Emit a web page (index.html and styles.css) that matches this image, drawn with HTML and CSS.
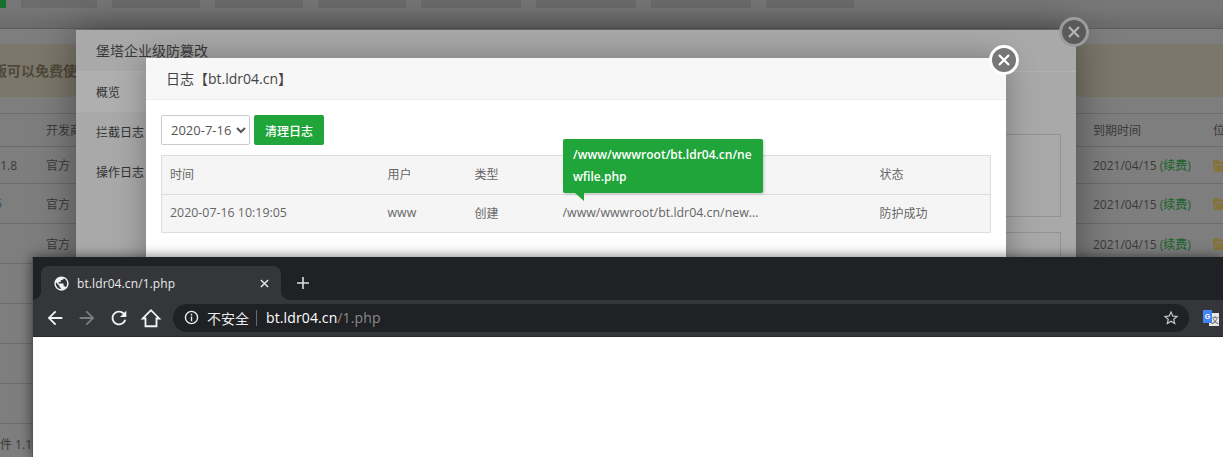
FILE: index.html
```html
<!DOCTYPE html>
<html lang="zh-CN">
<head>
<meta charset="utf-8">
<title>日志</title>
<link rel="stylesheet" href="styles.css">
</head>
<body>
<div class="page">
  <div class="topbar">
    <span class="pill pill-green"></span><span class="pill w76"></span><span class="pill w88"></span><span class="pill w88"></span><span class="pill w88"></span><span class="pill w100"></span><span class="pill w100"></span><span class="pill w100"></span><span class="pill w88"></span>
  </div>
  <div class="alert"><span class="alert-text">版可以免费使用</span></div>
  <table class="soft">
    <colgroup><col class="c-name"><col class="c-dev"><col class="c-date"><col class="c-pos"></colgroup>
    <tr class="r-head"><th></th><th>开发商</th><th>到期时间</th><th>位</th></tr>
    <tr class="r-first"><td class="name n1">1.8</td><td>官方</td><td>2021/04/15 <a class="renew">(续费)</a></td><td><svg class="folder" viewBox="0 0 16 13"><path d="M0 2a1 1 0 0 1 1-1h4l1.500 1.500H13a1 1 0 0 1 1 1V5H3.500L0 11z"/><path d="M4 6h12l-3 7H0z"/></svg></td></tr>
    <tr><td class="name n2">5</td><td>官方</td><td>2021/04/15 <a class="renew">(续费)</a></td><td><svg class="folder" viewBox="0 0 16 13"><path d="M0 2a1 1 0 0 1 1-1h4l1.500 1.500H13a1 1 0 0 1 1 1V5H3.500L0 11z"/><path d="M4 6h12l-3 7H0z"/></svg></td></tr>
    <tr><td class="name"></td><td>官方</td><td>2021/04/15 <a class="renew">(续费)</a></td><td><svg class="folder" viewBox="0 0 16 13"><path d="M0 2a1 1 0 0 1 1-1h4l1.500 1.500H13a1 1 0 0 1 1 1V5H3.500L0 11z"/><path d="M4 6h12l-3 7H0z"/></svg></td></tr>
    <tr><td class="name"></td><td></td><td></td><td></td></tr>
    <tr><td class="name"></td><td></td><td></td><td></td></tr>
    <tr><td class="name"></td><td></td><td></td><td></td></tr>
    <tr><td class="name"></td><td></td><td></td><td></td></tr>
    <tr><td class="name n3">件 1.1</td><td></td><td></td><td></td></tr>
  </table>
</div>

<section class="win-outer">
  <header class="outer-title">堡塔企业级防篡改</header>
  <div class="outer-body">
    <nav class="outer-nav">
      <div class="nav-item nav-active">概览</div>
      <div class="nav-item">拦截日志</div>
      <div class="nav-item">操作日志</div>
    </nav>
    <div class="outer-main">
      <div class="outer-box"></div>
      <div class="outer-box"></div>
    </div>
  </div>
  <button class="close close-outer" aria-label="关闭"><svg viewBox="0 0 14 14"><path d="M2 2l10 10M12 2L2 12"/></svg></button>
</section>

<section class="win-inner">
  <header class="inner-title">日志【bt.ldr04.cn】</header>
  <div class="inner-body">
    <div class="tools">
      <select class="date-select"><option>2020-7-16</option></select>
      <button class="btn-clear">清理日志</button>
    </div>
    <table class="log">
      <colgroup><col class="l1"><col class="l2"><col class="l3"><col class="l4"><col class="l5"></colgroup>
      <thead><tr><th>时间</th><th>用户</th><th>类型</th><th></th><th>状态</th></tr></thead>
      <tbody><tr><td class="lat">2020-07-16 10:19:05</td><td class="lat">www</td><td>创建</td><td class="lat"><div class="path">/www/wwwroot/bt.ldr04.cn/newfile.php</div></td><td>防护成功</td></tr></tbody>
    </table>
  </div>
  <div class="tip">/www/wwwroot/bt.ldr04.cn/newfile.php</div>
  <button class="close close-inner" aria-label="关闭"><svg viewBox="0 0 14 14"><path d="M2 2l10 10M12 2L2 12"/></svg></button>
</section>

<section class="browser">
  <div class="tabstrip">
    <div class="tab">
      <svg class="ico globe" viewBox="0 0 24 24"><path d="M12 2C6.480 2 2 6.480 2 12s4.480 10 10 10 10-4.480 10-10S17.520 2 12 2zm-1 17.930c-3.950-.490-7-3.850-7-7.930 0-.620.080-1.210.210-1.790L9 15v1c0 1.100.900 2 2 2v1.930zm6.900-2.540c-.260-.810-1-1.390-1.900-1.390h-1v-3c0-.550-.450-1-1-1H8v-2h2c.550 0 1-.450 1-1V7h2c1.100 0 2-.900 2-2v-.410c2.930 1.190 5 4.060 5 7.410 0 2.080-.800 3.970-2.100 5.390z"/></svg>
      <span class="tab-title">bt.ldr04.cn/1.php</span>
      <svg class="tab-x" viewBox="0 0 10 10"><path d="M1 1l8 8M9 1l-8 8"/></svg>
    </div>
    <svg class="tab-plus" viewBox="0 0 12 12"><path d="M6 0v12M0 6h12"/></svg>
  </div>
  <div class="toolbar">
    <svg class="nav-ico" viewBox="0 0 24 24"><path d="M20 11H7.830l5.590-5.590L12 4l-8 8 8 8 1.410-1.410L7.830 13H20v-2z"/></svg>
    <svg class="nav-ico dim" viewBox="0 0 24 24"><path d="M12 4l-1.410 1.410L16.170 11H4v2h12.170l-5.580 5.590L12 20l8-8z"/></svg>
    <svg class="nav-ico" viewBox="0 0 24 24"><path d="M17.650 6.350C16.200 4.900 14.210 4 12 4c-4.420 0-7.990 3.580-7.990 8s3.570 8 7.990 8c3.730 0 6.840-2.550 7.730-6h-2.080c-.820 2.330-3.040 4-5.650 4-3.310 0-6-2.690-6-6s2.690-6 6-6c1.660 0 3.140.690 4.220 1.780L13 11h7V4l-2.350 2.350z"/></svg>
    <svg class="nav-ico" viewBox="0 0 24 24"><path d="M12 3.500L3 12.500h3V21h12v-8.500h3z" class="home"/></svg>
    <div class="omnibox">
      <svg class="info" viewBox="0 0 16 16"><circle cx="8" cy="8" r="6.500"/><path d="M8 7v5M8 4v1.800"/></svg>
      <span class="insecure">不安全</span>
      <span class="sep"></span>
      <span class="url">bt.ldr04.cn<span class="url-dim">/1.php</span></span>
      <svg class="star" viewBox="0 0 24 24"><path d="M22 9.240l-7.190-.620L12 2 9.190 8.630 2 9.240l5.460 4.730L5.820 21 12 17.270 18.180 21l-1.630-7.030L22 9.240zM12 15.400l-3.760 2.270 1-4.280-3.320-2.880 4.380-.380L12 6.100l1.710 4.040 4.380.380-3.320 2.880 1 4.280L12 15.400z"/></svg>
    </div>
    <div class="ext"><span class="ext-zh">文</span><span class="ext-g">G</span></div>
  </div>
  <div class="viewport"></div>
</section>
</body>
</html>
```

FILE: styles.css
```css
* { box-sizing: border-box; }
html, body { margin: 0; height: 457px; overflow: hidden; }
body {
  position: relative;
  width: 1223px;
  background: #7e7e7e;
  font-family: "Open Sans", "Noto Sans CJK SC", sans-serif;
  font-size: 12px;
  color: #3a3a3a;
}

/* dimmed page behind the dialogs */
.topbar {
  display: flex;
  gap: 15px;
  height: 29px;
  background: linear-gradient(#777 30%, #6a6a6a);
  border-bottom: 1px solid #5c5c5c;
}
.pill { height: 8px; background: #6c6c6c; }
.pill-green { width: 6px; background: #14702a; }
.w76 { width: 76px; }
.w88 { width: 88px; }
.w100 { width: 100px; }

.alert {
  height: 53px;
  margin: 15px 0 16px;
  background: #7b776a;
  overflow: hidden;
  line-height: 53px;
  font-size: 14px;
  font-weight: 700;
  color: #50483a;
  white-space: nowrap;
}
.alert-text { margin-left: -7px; }

.soft {
  width: 1223px;
  table-layout: fixed;
  border-collapse: collapse;
  border-top: 1px solid #6b6b6b;
}
.c-name { width: 38px; }
.c-dev { width: 1047px; }
.c-date { width: 120px; }
.c-pos { width: 18px; }
.soft tr { height: 40px; }
.soft .r-head { height: 33px; }
.soft .r-first { height: 37px; }
.soft th, .soft td {
  padding: 0 0 0 8px;
  border-bottom: 1px solid #6b6b6b;
  font-weight: 400;
  text-align: left;
  white-space: nowrap;
  overflow: hidden;
}
.soft .name { padding: 0; text-align: right; }
.soft .n1 { padding-right: 21px; }
.soft .n2 { text-align: left; text-indent: -5px; color: #34506b; }
.soft .n3 { padding-right: 10px; }
.renew { color: #17632a; }
.folder { display: block; width: 16px; height: 13px; fill: #85743a; }

/* outer dialog */
.win-outer {
  position: absolute;
  left: 76px;
  top: 30px;
  width: 1000px;
  height: 400px;
  background: #a9a9a9;
  box-shadow: 0 0 40px rgba(0, 0, 0, .4);
}
.outer-title {
  height: 42px;
  padding-left: 20px;
  line-height: 42px;
  font-size: 14px;
  color: #3a3a3a;
  border-bottom: 1px solid #b2b2b2;
}
.outer-body { display: flex; }
.outer-nav { width: 70px; flex: none; }
.nav-item {
  height: 40px;
  padding-left: 20px;
  line-height: 42px;
  color: #333;
  white-space: nowrap;
}
.nav-active { background: rgba(255, 255, 255, .08); }
.outer-main {
  flex: 1;
  display: flex;
  flex-direction: column;
  gap: 15px;
  padding: 62px 15px 0 0;
}
.outer-box { height: 83px; border: 1px solid #939393; }

/* close buttons */
.close {
  position: absolute;
  width: 30px;
  height: 30px;
  padding: 0;
  border-radius: 50%;
  display: flex;
  align-items: center;
  justify-content: center;
}
.close svg { width: 14px; height: 14px; fill: none; stroke-width: 2.200; }
.close-outer { left: 983px; top: -13px; background: #5a5a5a; border: 3px solid #9c9c9c; }
.close-outer svg { stroke: #b4b4b4; }
.close-inner { left: 843px; top: -13px; background: #777; border: 3px solid #fff; }
.close-inner svg { stroke: #fff; }

/* inner dialog */
.win-inner {
  position: absolute;
  left: 146px;
  top: 58px;
  width: 860px;
  height: 300px;
  background: #fff;
  box-shadow: 0 0 30px rgba(0, 0, 0, .3);
  color: #666;
}
.inner-title {
  height: 42px;
  padding-left: 20px;
  line-height: 41px;
  font-size: 14px;
  color: #444;
  background: #f7f7f7;
  border-bottom: 1px solid #eee;
}
.inner-body { padding: 15px; }
.tools { display: flex; gap: 4px; margin-bottom: 10px; }
.date-select {
  width: 89px;
  height: 30px;
  padding: 0 0 0 5px;
  border: 1px solid #ccc;
  border-radius: 2px;
  background: #fff;
  font: 13px "Open Sans", sans-serif;
  color: #555;
}
.btn-clear {
  width: 70px;
  height: 30px;
  padding: 0;
  border: 0;
  border-radius: 2px;
  background: #20a53a;
  color: #fff;
  font: 500 12px "Noto Sans CJK SC", sans-serif;
}
.log {
  width: 829px;
  table-layout: fixed;
  border-collapse: collapse;
  background: #f5f5f5;
  border: 1px solid #ddd;
}
.l1 { width: 218px; }
.l2 { width: 87px; }
.l3 { width: 88px; }
.l4 { width: 317px; }
.l5 { width: 119px; }
.log th, .log td { padding: 0 8px 2px; text-align: left; font-weight: 400; }
.log th { height: 39px; border-bottom: 1px solid #ddd; }
.log td { height: 38px; }
.lat { font-size: 12.400px; }
.path {
  width: 196px;
  overflow: hidden;
  white-space: nowrap;
  text-overflow: ellipsis;
}
.tip {
  position: absolute;
  left: 417px;
  top: 81px;
  width: 200px;
  height: 54px;
  padding: 5px 10px;
  border-radius: 2px;
  background: #20a53a;
  color: #fff;
  font-size: 12px;
  font-weight: 600;
  line-height: 22px;
  word-break: break-all;
  box-shadow: 1px 1px 3px rgba(0, 0, 0, .2);
}
.tip::after {
  content: "";
  position: absolute;
  left: 12px;
  top: 54px;
  border-style: solid;
  border-width: 0 9px 8px 0;
  border-color: transparent #20a53a transparent transparent;
}

/* foreground browser */
.browser {
  position: absolute;
  left: 32px;
  top: 257px;
  width: 1191px;
  height: 200px;
  background: #202124;
  border-left: 1px solid #555;
  box-shadow: 0 0 12px rgba(0, 0, 0, .55);
  display: flex;
  flex-direction: column;
  color: #e8eaed;
  font-family: "Open Sans", "Noto Sans CJK SC", sans-serif;
}
.tabstrip {
  height: 43px;
  padding: 9px 0 0 8px;
  display: flex;
  align-items: flex-start;
}
.tab {
  position: relative;
  width: 240px;
  height: 34px;
  padding: 0 12px;
  display: flex;
  align-items: center;
  background: #35363a;
  border-radius: 8px 8px 0 0;
}
.tab::before, .tab::after {
  content: "";
  position: absolute;
  bottom: 0;
  width: 8px;
  height: 8px;
}
.tab::before { left: -8px; background: radial-gradient(circle at 0 0, #202124 7.500px, #35363a 8px); }
.tab::after { right: -8px; background: radial-gradient(circle at 100% 0, #202124 7.500px, #35363a 8px); }
.globe { width: 17px; height: 17px; fill: #f1f3f4; flex: none; }
.tab-title { margin-left: 7px; font-size: 12px; letter-spacing: .1px; white-space: nowrap; }
.tab-x { width: 9px; height: 9px; margin-left: auto; stroke: #e8eaed; stroke-width: 1.600; fill: none; flex: none; }
.tab-plus { width: 12px; height: 12px; margin: 11px 0 0 16px; stroke: #dcdde0; stroke-width: 1.600; fill: none; }

.toolbar {
  height: 37px;
  padding: 4px 0 5px 11px;
  display: flex;
  align-items: center;
  background: #35363a;
  border-bottom: 1px solid #2a2a2d;
}
.nav-ico { width: 22px; height: 22px; margin-right: 10px; fill: #f1f3f4; flex: none; }
.nav-ico.dim { fill: #7c7d80; }
.home { fill: none; stroke: #f1f3f4; stroke-width: 2; }
.omnibox {
  width: 1016px;
  height: 28px;
  margin-left: 1px;
  padding: 0 9px 0 11px;
  display: flex;
  align-items: center;
  flex: none;
  border-radius: 14px;
  background: #202124;
}
.info { width: 15px; height: 15px; fill: none; stroke: #e8eaed; stroke-width: 1.500; flex: none; }
.insecure { margin-left: 8px; font-size: 14px; white-space: nowrap; }
.sep { width: 1px; height: 16px; margin: 0 9px 0 7px; background: #6a6b6e; }
.url { font-size: 14px; letter-spacing: .12px; color: #fff; white-space: nowrap; }
.url-dim { color: #8a8b8e; }
.star { width: 18px; height: 18px; margin-left: auto; fill: #c4c6c9; flex: none; }
.ext { position: relative; width: 16px; height: 16px; margin-left: 14px; flex: none; }
.ext-g {
  position: absolute;
  left: 0;
  top: 0;
  width: 9px;
  height: 13px;
  background: #4285f4;
  color: #fff;
  font: 700 7px/13px "Liberation Sans", sans-serif;
  text-align: center;
}
.ext-zh {
  position: absolute;
  left: 6px;
  top: 3px;
  width: 10px;
  height: 13px;
  background: #e8e8e8;
  color: #555;
  font: 8px/13px "Noto Sans CJK SC", sans-serif;
  text-align: right;
}
.viewport { flex: 1; background: #fff; }
```
